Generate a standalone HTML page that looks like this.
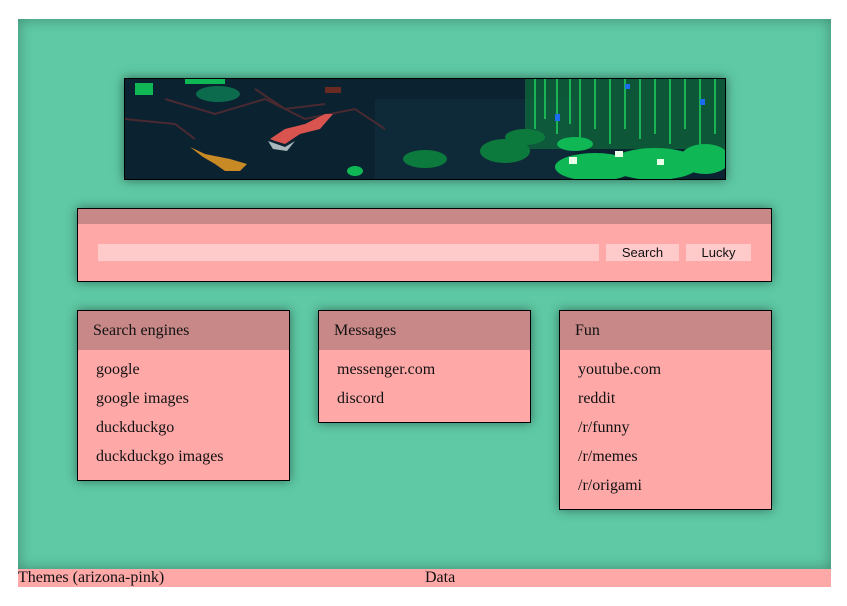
<!DOCTYPE html>
<html><head><meta charset="utf-8"><style>
*{margin:0;padding:0;box-sizing:border-box}
body{width:847px;height:606px;background:#fff;position:relative;overflow:hidden;font-family:"Liberation Serif",serif;color:#111}
.main{position:absolute;left:18px;top:19px;width:813px;height:550px;background:#5ec9a4;box-shadow:inset 0 0 14px rgba(0,0,0,.3)}
.banner{position:absolute;left:124px;top:78px;width:602px;height:102px;border:1px solid #000;background:#0b2231;box-shadow:0 0 10px rgba(0,0,0,.5);overflow:hidden}
.box{position:absolute;background:#fea8a8;border:1px solid #000;box-shadow:0 0 10px rgba(0,0,0,.45)}
.hd{background:#c98888}
.search{left:77px;top:208px;width:695px;height:74px}
.search .hd{height:15px}
.inp{position:absolute;left:20px;top:35px;width:501px;height:17px;background:#fecaca}
.btn{position:absolute;top:35px;height:17px;background:#fecaca;font:13px "Liberation Sans",sans-serif;text-align:center;line-height:17px;color:#111}
.card .hd{height:39px;padding-left:15px;line-height:40px;font-size:16px}
.card ul{list-style:none;padding:10px 0 0 18px}
.card li{font-size:16px;height:29px;line-height:20px}
.foot{position:absolute;left:18px;top:569px;width:813px;height:18px;background:#fea8a8;font-size:16px;line-height:18px}
</style></head><body>
<div class="main"></div>
<div class="banner"><svg width="602" height="102" viewBox="0 0 602 102">
<rect width="602" height="102" fill="#0b2231"/>
<rect x="250" y="20" width="200" height="80" fill="#0f2c3c" opacity=".7"/>
<g stroke="#4a2a30" stroke-width="2" fill="none"><path d="M40 20 L90 35 L140 20 L180 40 L230 30 L260 50"/><path d="M0 40 L50 45 L70 60"/><path d="M130 10 L160 30 L200 25"/></g>
<rect x="10" y="4" width="18" height="12" fill="#0fb855"/><rect x="60" y="0" width="40" height="5" fill="#0fb855"/>
<ellipse cx="93" cy="15" rx="22" ry="8" fill="#0b6b4c"/>
<rect x="200" y="8" width="16" height="6" fill="#6a2a22"/>
<path d="M145 60 L160 50 L180 45 L200 35 L208 35 L195 50 L175 55 L160 65 L150 62Z" fill="#d9534f"/>
<path d="M143 62 L160 68 L170 62 L162 72 L148 70Z" fill="#aab8bc"/>
<path d="M65 68 L80 75 L105 80 L122 85 L115 92 L100 92 L90 85 L78 78Z" fill="#c88a25"/>
<g fill="#0c7a3c"><ellipse cx="300" cy="80" rx="22" ry="9"/><ellipse cx="380" cy="72" rx="25" ry="12"/><ellipse cx="400" cy="58" rx="20" ry="8"/></g>
<g fill="#0f7a3e"><rect x="400" y="0" width="202" height="70" opacity=".6"/></g>
<g stroke="#1ed25e" stroke-width="1.5"><path d="M410 0V50M420 0V40M432 0V55M445 0V45M455 0V60M470 0V50M485 0V65M500 0V50M515 0V60M530 0V55M545 0V65M560 0V50M575 0V70M590 0V55"/></g>
<g fill="#0fb855"><ellipse cx="470" cy="88" rx="40" ry="14"/><ellipse cx="530" cy="85" rx="45" ry="16"/><ellipse cx="580" cy="80" rx="25" ry="15"/><ellipse cx="450" cy="65" rx="18" ry="7"/><ellipse cx="230" cy="92" rx="8" ry="5"/></g>
<g fill="#1a6cf0"><rect x="430" y="35" width="5" height="7"/><rect x="500" y="5" width="5" height="5"/><rect x="575" y="20" width="5" height="6"/></g>
<g fill="#e8ffe8"><rect x="444" y="78" width="8" height="7"/><rect x="490" y="72" width="8" height="6"/><rect x="532" y="80" width="7" height="6"/></g>
</svg></div>
<div class="box search"><div class="hd"></div><div class="inp"></div>
<div class="btn" style="left:528px;width:73px">Search</div><div class="btn" style="left:608px;width:65px">Lucky</div></div>
<div class="box card" style="left:77px;top:310px;width:213px;height:171px"><div class="hd">Search engines</div><ul><li>google</li><li>google images</li><li>duckduckgo</li><li>duckduckgo images</li></ul></div>
<div class="box card" style="left:318px;top:310px;width:213px;height:113px"><div class="hd">Messages</div><ul><li>messenger.com</li><li>discord</li></ul></div>
<div class="box card" style="left:559px;top:310px;width:213px;height:200px"><div class="hd">Fun</div><ul><li>youtube.com</li><li>reddit</li><li>/r/funny</li><li>/r/memes</li><li>/r/origami</li></ul></div>
<div class="foot"><span>Themes (arizona-pink)</span><span style="position:absolute;left:407px">Data</span></div>
</body></html>
